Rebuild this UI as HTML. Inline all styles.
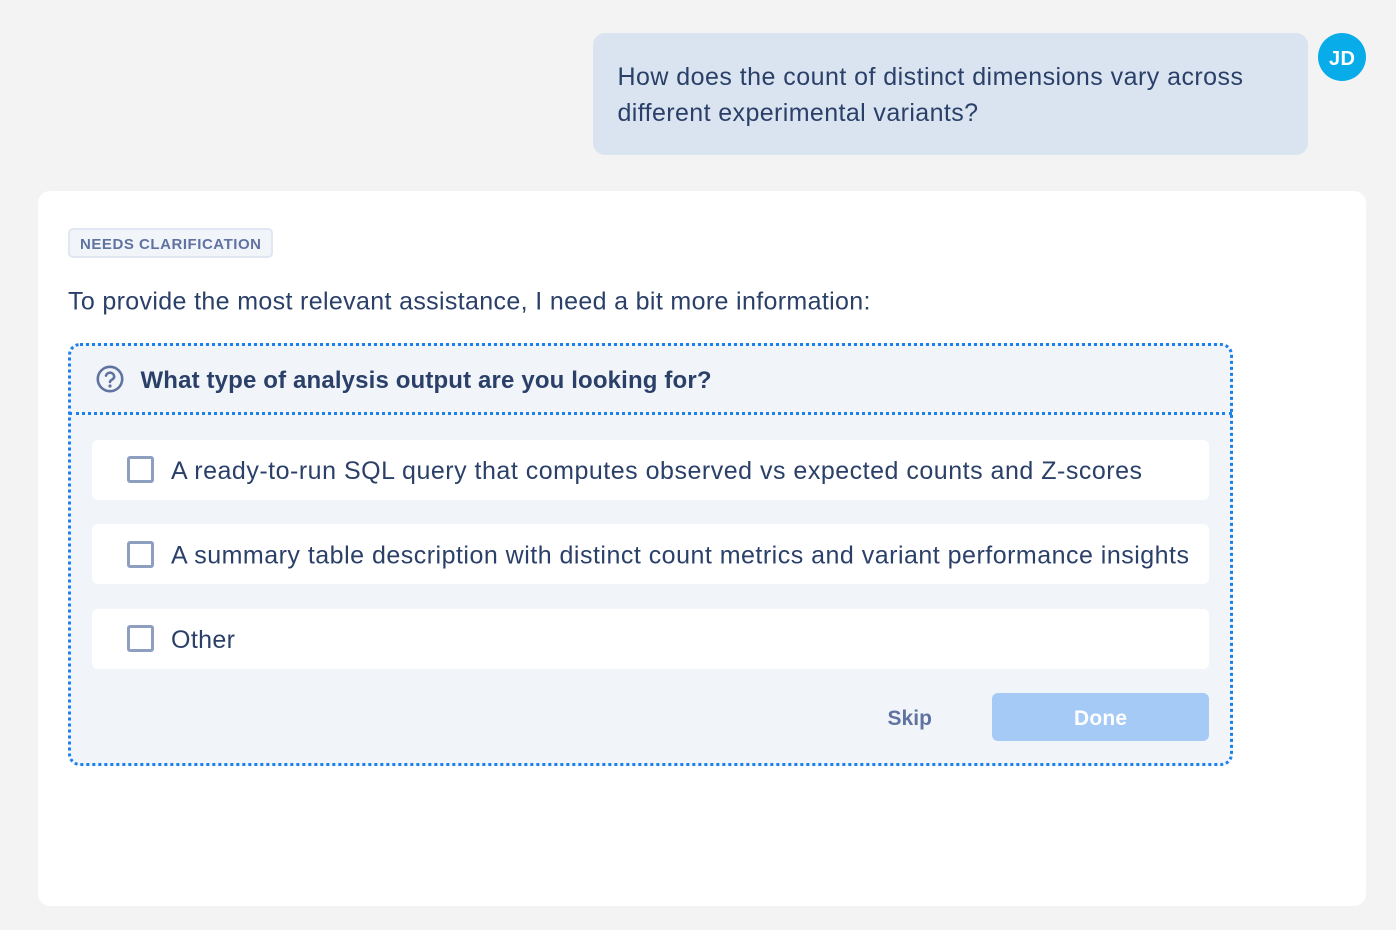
<!DOCTYPE html>
<html lang="en">
<head>
<meta charset="utf-8">
<title>Clarification</title>
<style>
html,body{margin:0;padding:0;width:1396px;height:930px;overflow:hidden;background:#f3f3f4;}
.a{position:absolute;box-sizing:border-box;}
svg.t{position:absolute;left:0;top:0;width:1396px;height:930px;pointer-events:none;}
svg.t text{font-family:"Liberation Sans",Arial,sans-serif;font-size:25px;fill:#2b4069;}
.opt{left:92px;width:1117px;height:60px;background:#fff;border-radius:6px;}
.cb{left:127px;width:27px;height:27px;border:3px solid #8e9ec1;border-radius:3px;background:#fff;}
</style>
</head>
<body>
<div class="a" style="left:593px;top:33px;width:715px;height:122px;background:#dae4f0;border-radius:12px;"></div>
<div class="a" style="left:1318px;top:33px;width:48px;height:48px;background:#07ace8;border-radius:50%;"></div>
<div class="a" style="left:38px;top:191px;width:1328px;height:715px;background:#fff;border-radius:12px;"></div>
<div class="a" style="left:68px;top:228px;width:205px;height:30px;background:#f1f5fa;border:2px solid #e0e7f2;border-radius:5px;"></div>
<div class="a" style="left:68px;top:343px;width:1165px;height:423px;background:#f1f5fa;border:3px dotted #1a80ea;border-radius:12px;"></div>
<div class="a" style="left:69px;top:412px;width:1163px;height:3px;border-top:3px dotted #1a80ea;"></div>
<div class="a opt" style="top:440px;"></div>
<div class="a opt" style="top:524px;"></div>
<div class="a opt" style="top:609px;"></div>
<div class="a cb" style="top:456px;"></div>
<div class="a cb" style="top:541px;"></div>
<div class="a cb" style="top:625px;"></div>
<div class="a" style="left:992px;top:693px;width:217px;height:48px;background:#a4caf5;border-radius:6px;"></div>
<svg class="t" viewBox="0 0 1396 930" xmlns="http://www.w3.org/2000/svg">
  <text x="617.5" y="85" textLength="625.5" lengthAdjust="spacing">How does the count of distinct dimensions vary across</text>
  <text x="617.5" y="121" textLength="360.5" lengthAdjust="spacing">different experimental variants?</text>
  <text x="1329" y="65" textLength="26" lengthAdjust="spacing" style="font-size:20px;font-weight:700;fill:#fff;">JD</text>
  <text x="80" y="249" textLength="181" lengthAdjust="spacing" style="font-size:15px;font-weight:700;fill:#6073a0;">NEEDS CLARIFICATION</text>
  <text x="68" y="309.5" textLength="802.5" lengthAdjust="spacing">To provide the most relevant assistance, I need a bit more information:</text>
  <g fill="none" stroke="#6073a0" stroke-width="2.6" stroke-linecap="round">
    <circle cx="110" cy="379" r="12.2"/>
    <path d="M106 375.6a4.2 4.2 0 0 1 8.2 1.1c0 2.7-4.2 3.2-4.2 5.2"/>
  </g>
  <circle cx="110" cy="386" r="1.6" fill="#6073a0"/>
  <text x="140.5" y="388" textLength="571" lengthAdjust="spacing" style="font-weight:700;font-size:24px;">What type of analysis output are you looking for?</text>
  <text x="171" y="479" textLength="971" lengthAdjust="spacing">A ready-to-run SQL query that computes observed vs expected counts and Z-scores</text>
  <text x="171" y="563.5" textLength="1018" lengthAdjust="spacing">A summary table description with distinct count metrics and variant performance insights</text>
  <text x="171" y="648" textLength="64" lengthAdjust="spacing">Other</text>
  <text x="887.5" y="725" textLength="44.5" lengthAdjust="spacing" style="font-weight:700;font-size:21px;fill:#6073a0;">Skip</text>
  <text x="1074" y="725" textLength="53" lengthAdjust="spacing" style="font-weight:700;font-size:21px;fill:#fff;">Done</text>
</svg>
</body>
</html>
